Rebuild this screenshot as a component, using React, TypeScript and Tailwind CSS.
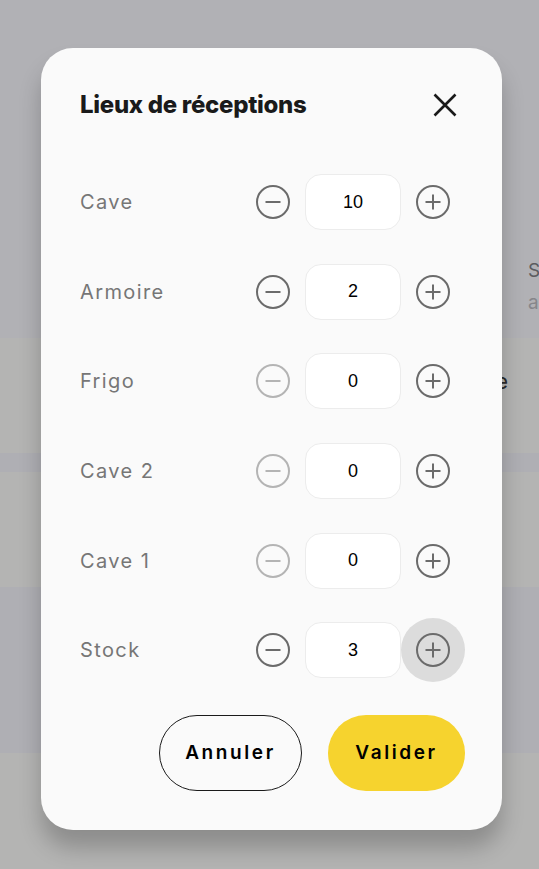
import { useState } from "react";

const lieuxInitiaux = [
  { nom: "Cave", quantite: 10 },
  { nom: "Armoire", quantite: 2 },
  { nom: "Frigo", quantite: 0 },
  { nom: "Cave 2", quantite: 0 },
  { nom: "Cave 1", quantite: 0 },
  { nom: "Stock", quantite: 3 },
];

function IconeMoins({ actif }: { actif: boolean }) {
  return (
    <svg width="36" height="36" viewBox="0 0 36 36" fill="none">
      <circle cx="18" cy="18" r="16" stroke={actif ? "#6b6b6b" : "#b4b4b4"} strokeWidth="2" />
      <line x1="10.5" y1="18" x2="25.5" y2="18" stroke={actif ? "#6b6b6b" : "#b4b4b4"} strokeWidth="2" />
    </svg>
  );
}

function IconePlus() {
  return (
    <svg width="36" height="36" viewBox="0 0 36 36" fill="none">
      <circle cx="18" cy="18" r="16" stroke="#6b6b6b" strokeWidth="2" />
      <line x1="10.5" y1="18" x2="25.5" y2="18" stroke="#6b6b6b" strokeWidth="2" />
      <line x1="18" y1="10.5" x2="18" y2="25.5" stroke="#6b6b6b" strokeWidth="2" />
    </svg>
  );
}

function LigneLieu({
  nom,
  quantite,
  survol,
  surChangement,
}: {
  nom: string;
  quantite: number;
  survol?: boolean;
  surChangement: (q: number) => void;
}) {
  return (
    <div className="flex h-16 items-center">
      <span className="flex-1 text-[20px] tracking-[1.4px] text-[#767676]">{nom}</span>
      <button
        type="button"
        onClick={() => surChangement(Math.max(0, quantite - 1))}
        className="flex h-16 w-16 items-center justify-center rounded-full"
      >
        <IconeMoins actif={quantite > 0} />
      </button>
      <div className="flex h-14 w-24 items-center justify-center rounded-2xl border border-[#ececec] bg-white font-['Liberation_Sans',sans-serif] text-[18px] text-black">
        {quantite}
      </div>
      <button
        type="button"
        onClick={() => surChangement(quantite + 1)}
        className={`flex h-16 w-16 items-center justify-center rounded-full ${survol ? "bg-[#dcdcdc]" : ""}`}
      >
        <IconePlus />
      </button>
    </div>
  );
}

export default function App() {
  const [lieux, setLieux] = useState(lieuxInitiaux);

  return (
    <div className="relative h-[869px] w-full overflow-hidden font-['Inter',sans-serif]">
      {/* page derrière l'overlay */}
      <div className="flex h-full flex-col">
        <div className="flex h-[338px] flex-col bg-[#b1b1b5] pl-[528px] pt-[259px] whitespace-nowrap text-[19px]">
          <span className="leading-[24px] text-[#5c5c60]">S</span>
          <span className="mt-[8px] leading-[24px] text-[#86868a]">a</span>
        </div>
        <div className="flex h-[115px] items-start justify-end bg-[#b4b4b3] pr-[31px] pt-[29px] text-[22px] leading-[28px] text-[#2a2a2a]">
          Cave
        </div>
        <div className="h-[19px] bg-[#afafb4]" />
        <div className="h-[115px] bg-[#b4b4b3]" />
        <div className="h-[166px] bg-[#afafb4]" />
        <div className="flex-1 bg-[#b4b4b3]" />
      </div>

      {/* modale */}
      <div className="absolute inset-0 flex justify-start pl-[41px] pt-[48px]">
        <div className="h-fit w-[461px] rounded-[32px] bg-[#fafafa] pb-[39px] pl-[39px] pr-[37px] pt-[39px] shadow-[0_18px_22px_rgba(0,0,0,0.22)]">
          <div className="flex h-9 items-center justify-between">
            <h2 className="text-[24px] font-extrabold tracking-[-0.3px] text-[#1a1a1a]">Lieux de réceptions</h2>
            <button type="button" className="mr-[8px] flex h-6 w-6 items-center justify-center">
              <svg width="24" height="24" viewBox="0 0 24 24" fill="none">
                <path d="M1.5 1.5L22.5 22.5M22.5 1.5L1.5 22.5" stroke="#1a1a1a" strokeWidth="2.6" />
              </svg>
            </button>
          </div>

          <div className="mt-[47px] flex flex-col gap-[25.7px]">
            {lieux.map((l, i) => (
              <LigneLieu
                key={l.nom}
                nom={l.nom}
                quantite={l.quantite}
                survol={l.nom === "Stock"}
                surChangement={(q) =>
                  setLieux(lieux.map((x, j) => (j === i ? { ...x, quantite: q } : x)))
                }
              />
            ))}
          </div>

          <div className="mt-[33px] flex justify-end gap-[26px]">
            <button
              type="button"
              className="h-[76px] w-[143px] rounded-full border border-[#1a1a1a] text-[19px] font-semibold tracking-[2.6px] text-black"
            >
              Annuler
            </button>
            <button
              type="button"
              className="h-[76px] w-[137px] rounded-full bg-[#f6d32e] text-[19px] font-semibold tracking-[2.6px] text-black"
            >
              Valider
            </button>
          </div>
        </div>
      </div>
    </div>
  );
}
